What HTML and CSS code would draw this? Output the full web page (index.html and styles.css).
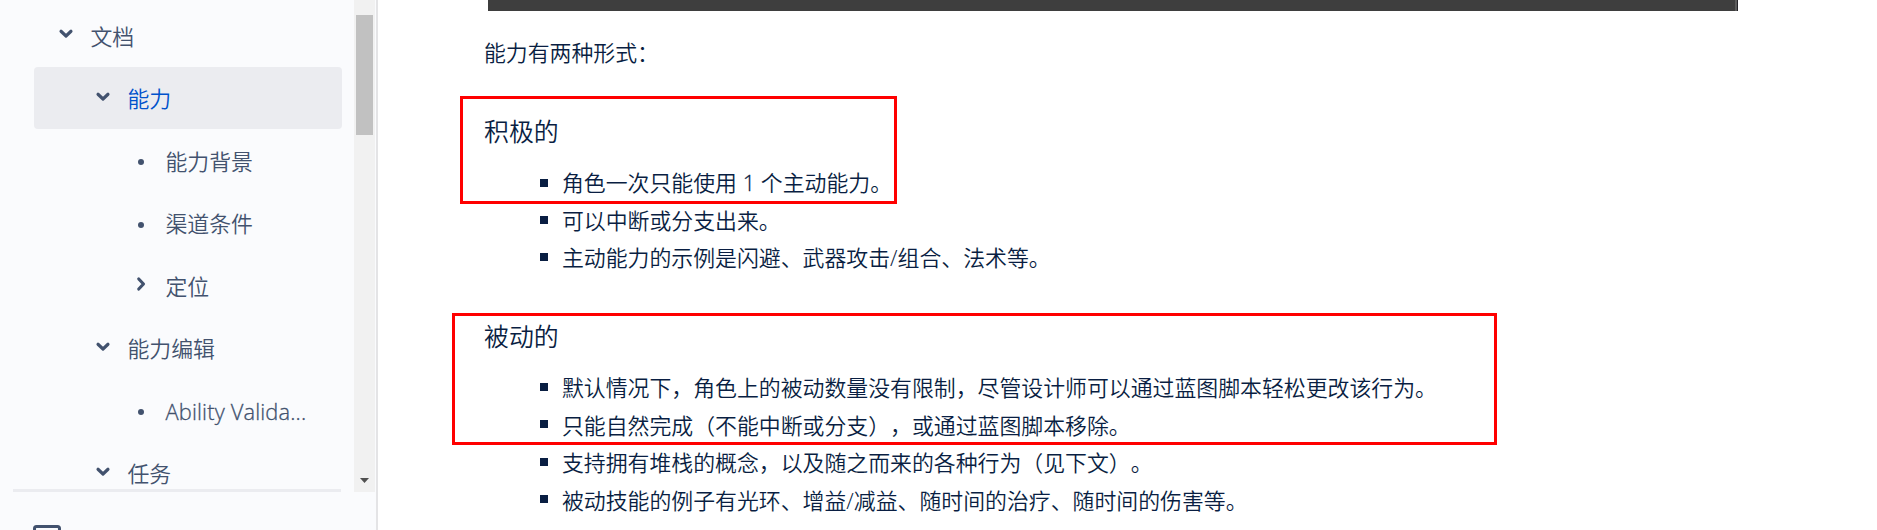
FILE: index.html
```
<!DOCTYPE html>
<html lang="zh-CN">
<head>
<meta charset="utf-8">
<title>能力</title>
<link rel="stylesheet" href="styles.css">
</head>
<body>
<div class="page">
  <aside class="sidebar">
    <div class="tree-wrap">
      <nav class="tree">
        <div class="item level-1"><svg class="icon" viewBox="0 0 16 16"><path d="M4 5.800 8 9.600l4-3.800"/></svg><span>文档</span></div>
        <div class="item level-2 selected"><svg class="icon" viewBox="0 0 16 16"><path d="M4 5.800 8 9.600l4-3.800"/></svg><span>能力</span></div>
        <div class="item level-3"><i class="dot"></i><span>能力背景</span></div>
        <div class="item level-3"><i class="dot"></i><span>渠道条件</span></div>
        <div class="item level-3"><svg class="icon" viewBox="0 0 16 16"><path d="M6.200 4 10 8l-3.800 4"/></svg><span>定位</span></div>
        <div class="item level-2"><svg class="icon" viewBox="0 0 16 16"><path d="M4 5.800 8 9.600l4-3.800"/></svg><span>能力编辑</span></div>
        <div class="item level-3"><i class="dot"></i><span class="latin">Ability Valida...</span></div>
        <div class="item level-2"><svg class="icon" viewBox="0 0 16 16"><path d="M4 5.800 8 9.600l4-3.800"/></svg><span>任务</span></div>
      </nav>
      <div class="scrollbar"><div class="thumb"></div><svg class="down" viewBox="0 0 9 5"><path d="M0 0h9L4.500 5z"/></svg></div>
    </div>
    <div class="divider"></div>
    <div class="footer"><svg class="archive" viewBox="0 0 28 28"><rect x="1.500" y="1.500" width="25" height="25" rx="2"/></svg></div>
  </aside>
  <main class="content">
    <div class="media"></div>
    <p class="intro">能力有两种形式：</p>
    <section class="group active">
      <h3>积极的</h3>
      <ul>
        <li><span>角色一次只能使用 <span class="latin">1</span> 个主动能力。</span></li>
        <li><span>可以中断或分支出来。</span></li>
        <li><span>主动能力的示例是闪避、武器攻击/组合、法术等。</span></li>
      </ul>
      <div class="mark mark-active"></div>
    </section>
    <section class="group passive">
      <h3>被动的</h3>
      <ul>
        <li>默认情况下，角色上的被动数量没有限制，尽管设计师可以通过蓝图脚本轻松更改该行为。</li>
        <li>只能自然完成（不能中断或分支），或通过蓝图脚本移除。</li>
        <li>支持拥有堆栈的概念，以及随之而来的各种行为（见下文）。</li>
        <li>被动技能的例子有光环、增益/减益、随时间的治疗、随时间的伤害等。</li>
      </ul>
      <div class="mark mark-passive"></div>
    </section>
  </main>
</div>
</body>
</html>
```
FILE: styles.css
```
* { box-sizing: border-box; }
body {
  margin: 0;
  background: #fff;
  color: #091e42;
  font-family: "Open Sans", "Noto Sans CJK SC", sans-serif;
  font-size: 21.880px;
  font-weight: 350;
  text-spacing-trim: space-all;
  overflow: hidden;
}
.page { display: flex; height: 530px; overflow: hidden; }
.sidebar {
  flex: none;
  width: 378px;
  background: #fafbfd;
  border-right: 2px solid #e4e4e6;
  color: #42526e;
}
.tree-wrap { display: flex; height: 489px; }
.tree {
  width: 354px;
  height: 489px;
  padding: 4.500px 12px 0 34px;
  overflow: hidden;
}
.item {
  display: flex;
  align-items: center;
  height: 62.500px;
  border-radius: 4px;
  line-height: 30px;
  white-space: nowrap;
}
.item span { padding-top: 2px; }
.level-1 { padding-left: 22px; }
.level-2 { padding-left: 59px; }
.level-3 { padding-left: 97px; }
.selected { height: 62px; margin-bottom: 0.500px; background: #ebecf0; }
.selected span { color: #0052cc; }
.latin { -webkit-text-stroke: 0.300px currentColor; }
.item .latin { letter-spacing: 0.140px; }
.icon {
  width: 20px;
  height: 20px;
  margin: 0 15px 3px -0.500px;
  fill: none;
  stroke: #42526e;
  stroke-width: 2.500;
  stroke-linecap: round;
  stroke-linejoin: round;
}
.dot {
  width: 6px;
  height: 6px;
  margin: 3px 21.500px 0 7px;
  border-radius: 50%;
  background: #42526e;
}
.scrollbar {
  display: flex;
  flex-direction: column;
  justify-content: space-between;
  align-items: center;
  width: 21px;
  height: 492px;
  padding: 15px 2px 9px;
  background: #f1f1f1;
}
.thumb { width: 17px; height: 120px; background: #c1c1c1; }
.down { width: 9px; height: 5px; fill: #505050; }
.divider { width: 328px; height: 3px; margin-left: 13px; background: #ebecf0; }
.footer { padding: 33px 0 0 33px; }
.archive { display: block; width: 28px; height: 28px; fill: none; stroke: #42526e; stroke-width: 3; }
.content { flex: 1; padding-left: 106px; }
.media {
  width: 1250px;
  height: 11px;
  margin-left: 4px;
  background: #3e3e3e;
  border-right: 1px solid #242328;
  box-shadow: inset -2px 0 #5c5c5c;
}
.intro { margin: 23px 0 0; line-height: 38px; }
.group { position: relative; }
.active { padding-top: 40px; }
.passive { padding-top: 41px; }
h3 { margin: 0; font-size: 24.900px; font-weight: 350; line-height: 38px; }
ul { margin: 0; padding: 13px 0 0 56px; list-style: none; }
.active ul { padding-top: 14px; }
li { display: flex; align-items: center; height: 37.400px; white-space: nowrap; }
li > span { padding-bottom: 2px; }
li::before { content: ""; flex: none; width: 8px; height: 8px; margin-right: 14px; background: #091e42; }
.mark { position: absolute; border: 3px solid #f00; }
.mark-active { left: -24px; top: 24px; width: 437px; height: 108px; }
.mark-passive { left: -32px; top: 37px; width: 1045px; height: 132px; }
```
